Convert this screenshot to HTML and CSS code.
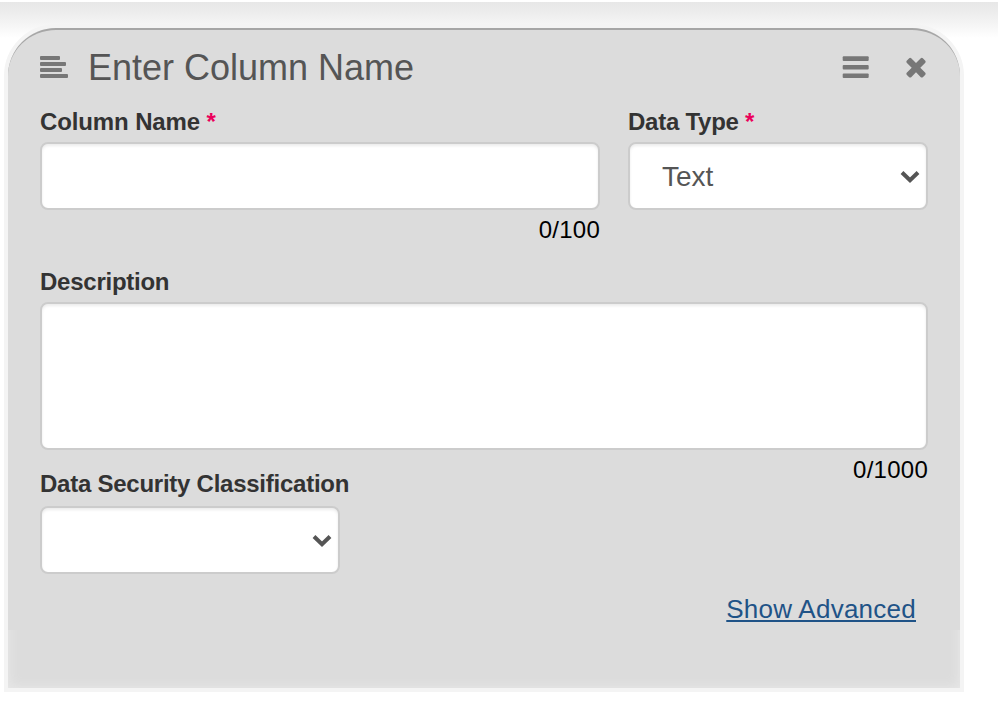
FILE: index.html
```html
<!DOCTYPE html>
<html lang="en">
<head>
<meta charset="utf-8">
<title>Enter Column Name</title>
<link rel="stylesheet" href="styles.css">
</head>
<body>
<main class="page">
  <form class="panel">
    <div class="panel-body">
      <header class="panel-header">
        <svg class="icon-type" width="28" height="22" viewBox="0 0 28 22" aria-hidden="true">
          <rect x="0" y="0" width="20" height="4" rx="1"/>
          <rect x="0" y="6" width="26" height="4" rx="1"/>
          <rect x="0" y="12" width="22" height="4" rx="1"/>
          <rect x="0" y="18" width="28" height="4" rx="1"/>
        </svg>
        <h1 class="title">Enter Column Name</h1>
        <svg class="icon-menu" width="28" height="24" viewBox="0 0 28 24" aria-hidden="true">
          <rect x="0.7" y="1.2" width="26" height="4.7" rx="1"/>
          <rect x="0.7" y="9.9" width="26" height="4.7" rx="1"/>
          <rect x="0.7" y="18.5" width="26" height="4.5" rx="1"/>
        </svg>
        <svg class="icon-close" width="22" height="22" viewBox="0 0 22 22" aria-hidden="true">
          <path d="M4.2 1.2Q5.2.4 6.2 1.2L11 6L15.8 1.2Q16.8.4 17.8 1.2L20.3 3.8Q21.1 4.8 20.3 5.8L15.3 10.8L20.3 15.8Q21.1 16.8 20.3 17.8L17.8 20.2Q16.8 21 15.8 20.2L11 15.3L6.2 20.2Q5.2 21 4.2 20.2L1.7 17.8Q.9 16.8 1.7 15.8L6.7 10.8L1.7 5.8Q.9 4.8 1.7 3.8Z"/>
        </svg>
      </header>
      <div class="row">
        <div class="field name-field">
          <label class="label" for="name">Column Name <span class="required">*</span></label>
          <input class="control" id="name" type="text">
          <div class="counter">0/100</div>
        </div>
        <div class="field type-field">
          <label class="label" for="type">Data Type <span class="required">*</span></label>
          <div class="select-wrap">
            <select class="control" id="type"><option>Text</option></select>
            <svg class="chevron" width="20" height="14" viewBox="0 0 20 14" aria-hidden="true"><path d="M2 2.5L10 10.2L18 2.5"/></svg>
          </div>
        </div>
      </div>
      <div class="field description-field">
        <label class="label" for="description">Description</label>
        <textarea class="control description" id="description"></textarea>
        <div class="counter">0/1000</div>
      </div>
      <div class="field security-field">
        <label class="label" for="security">Data Security Classification</label>
        <div class="select-wrap">
          <select class="control" id="security"><option></option></select>
          <svg class="chevron" width="20" height="14" viewBox="0 0 20 14" aria-hidden="true"><path d="M2 2.5L10 10.2L18 2.5"/></svg>
        </div>
      </div>
      <div class="advanced"><a href="#">Show Advanced</a></div>
    </div>
  </form>
</main>
</body>
</html>
```
FILE: styles.css
```css
* { box-sizing: border-box; }

body {
  margin: 0;
  background: #fff;
  font-family: "Liberation Sans", Arial, sans-serif;
}

.page {
  height: 710px;
  padding: 24px 34px 0 4px;
  background: linear-gradient(#e7e7e7, #eeeeee 35%, #fff) 0 2px / 100% 36px no-repeat;
  overflow: hidden;
}

.panel {
  height: 668px;
  border: 4px solid #f4f4f4;
  border-radius: 52px 52px 0 0;
  background: #dcdcdc;
  box-shadow: inset 0 0 12px #eaeaea;
}

.panel-body {
  height: 602px;
  padding: 0 32px;
  border-top: 2px solid #a6a6a6;
  border-radius: 48px 48px 0 0;
  background: #dcdcdc;
}

.panel-header {
  display: flex;
  height: 76px;
  padding-top: 16px;
}

.panel-header svg { fill: #777; flex: none; }
.icon-type { margin-top: 10px; }
.icon-menu { margin: 9px 35px 0 auto; }
.icon-close { margin: 11px 1px 0 0; }

.title {
  margin: 0 0 0 20px;
  color: #555;
  font-size: 36px;
  font-weight: 400;
  line-height: 44px;
}

.row {
  display: flex;
  justify-content: space-between;
  height: 160px;
  width: 888px;
}

.name-field { width: 560px; }
.type-field { width: 300px; }

.label {
  display: block;
  height: 36px;
  color: #333;
  font-size: 24px;
  font-weight: 700;
  line-height: 31px;
  letter-spacing: -.25px;
  white-space: nowrap;
}

.name-field .label { letter-spacing: -.12px; }

.required { color: #eb005b; }

.control {
  display: block;
  width: 100%;
  height: 68px;
  margin: 0;
  padding: 0 32px;
  border: 2px solid #ccc;
  border-radius: 8px;
  background: #fff;
  box-shadow: inset 0 2px 3px rgba(0, 0, 0, .08);
  color: #555;
  font: 28px "Liberation Sans", Arial, sans-serif;
  appearance: none;
  outline: 0;
}

.counter {
  color: #000;
  font-size: 24px;
  line-height: 40px;
  letter-spacing: .25px;
  text-align: right;
}

.description-field {
  width: 888px;
  height: 202px;
}

.description {
  height: 148px;
  resize: none;
}

.security-field {
  width: 300px;
  height: 106px;
}

.security-field .label { height: 38px; }

.select-wrap { position: relative; }

.chevron {
  position: absolute;
  top: 28px;
  right: 8px;
  fill: none;
  stroke: #555;
  stroke-width: 4;
  pointer-events: none;
}

.advanced {
  width: 876px;
  padding-top: 19px;
  text-align: right;
  font-size: 26px;
  line-height: 32px;
  letter-spacing: .25px;
}

.advanced a {
  color: #1f5387;
  text-decoration: underline;
  text-decoration-thickness: 2px;
  text-underline-offset: 2px;
  text-decoration-skip-ink: none;
}
```
